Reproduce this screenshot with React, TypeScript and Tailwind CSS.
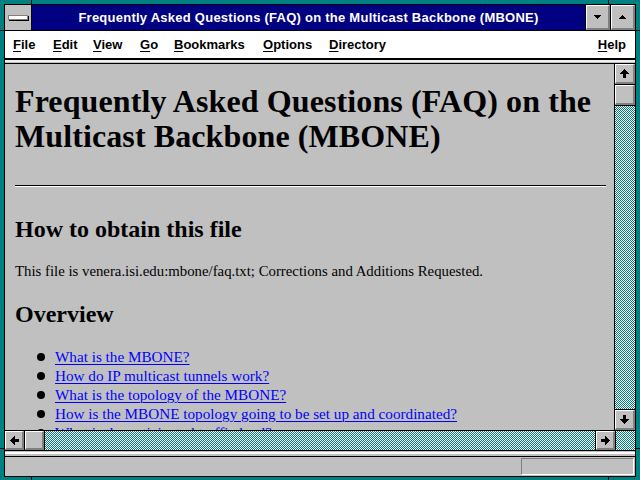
import React from 'react';

type Dir = 'up' | 'down' | 'left' | 'right';

const rotation: Record<Dir, string> = {
  up: '',
  down: 'rotate-180',
  left: '-rotate-90',
  right: 'rotate-90',
};

// Win 3.1 style fat arrow used on the scroll buttons
const Arrow: React.FC<{ dir: Dir }> = ({ dir }) => (
  <svg width="9" height="9" viewBox="0 0 9 9" shapeRendering="crispEdges" className={rotation[dir]}>
    <polygon points="4.5,0 9,5 6,5 6,9 3,9 3,5 0,5" fill="#000" />
  </svg>
);

const Bevel: React.FC<{ className?: string; children?: React.ReactNode }> = ({ className = '', children }) => (
  <div
    className={`bg-[#c0c0c0] border-t border-l border-t-white border-l-white border-b-2 border-r-2 border-b-[#808080] border-r-[#808080] flex items-center justify-center ${className}`}
  >
    {children}
  </div>
);

const checker =
  'bg-[image:repeating-conic-gradient(#008080_0_25%,#ffffff_0_50%)] bg-[length:2px_2px]';

const menu = [
  { key: 'F', rest: 'ile', w: 'w-[40px]' },
  { key: 'E', rest: 'dit', w: 'w-[40px]' },
  { key: 'V', rest: 'iew', w: 'w-[47px]' },
  { key: 'G', rest: 'o', w: 'w-[34px]' },
  { key: 'B', rest: 'ookmarks', w: 'w-[89px]' },
  { key: 'O', rest: 'ptions', w: 'w-[66px]' },
  { key: 'D', rest: 'irectory', w: 'w-[80px]' },
];

const links = [
  'What is the MBONE?',
  'How do IP multicast tunnels work?',
  'What is the topology of the MBONE?',
  'How is the MBONE topology going to be set up and coordinated?',
  'What is the anticipated traffic load?',
];

export default function App() {
  return (
    <div className="relative w-[640px] h-[480px] bg-[#008080] pt-[4px] pl-[4px] pr-[4px] pb-[3px] overflow-hidden font-['Liberation_Sans',sans-serif]">
      {/* resize corner notches in the frame */}
      <div className="absolute left-[31px] top-0 w-px h-[4px] bg-black" />
      <div className="absolute left-[608px] top-0 w-px h-[4px] bg-black" />
      <div className="absolute left-[31px] bottom-0 w-px h-[3px] bg-black" />
      <div className="absolute left-[608px] bottom-0 w-px h-[3px] bg-black" />
      <div className="absolute left-0 top-[30px] w-[4px] h-px bg-black" />
      <div className="absolute left-0 top-[448px] w-[4px] h-px bg-black" />
      <div className="absolute right-0 top-[30px] w-[4px] h-px bg-black" />
      <div className="absolute right-0 top-[448px] w-[4px] h-px bg-black" />

      <div className="w-[632px] h-[473px] border border-black flex flex-col bg-[#c0c0c0]">
        {/* title bar */}
        <div className="h-[25px] flex shrink-0">
          <div className="w-[26px] bg-[#c0c0c0] flex items-center justify-center">
            <div className="w-[20px] h-[5px] bg-white border border-[#808080] shadow-[1px_1px_0_#000]" />
          </div>
          <div className="w-px bg-black" />
          <div className="w-[553px] bg-[#000080] text-white font-bold text-[13px] tracking-[0.25px] flex items-center justify-center whitespace-nowrap">
            Frequently Asked Questions (FAQ) on the Multicast Backbone (MBONE)
          </div>
          <div className="w-px bg-black" />
          <Bevel className="w-[24px]">
            <svg width="7" height="4" viewBox="0 0 7 4" shapeRendering="crispEdges">
              <polygon points="0,0 7,0 3.5,4" fill="#000" />
            </svg>
          </Bevel>
          <div className="w-px bg-black" />
          <Bevel className="w-[24px]">
            <svg width="7" height="4" viewBox="0 0 7 4" shapeRendering="crispEdges">
              <polygon points="3.5,0 7,4 0,4" fill="#000" />
            </svg>
          </Bevel>
        </div>
        <div className="h-px bg-black shrink-0" />

        {/* menu bar */}
        <div className="h-[27px] bg-white flex items-center pl-[8px] text-[13px] font-bold text-black shrink-0">
          {menu.map((m) => (
            <div key={m.key} className={m.w}>
              <span className="underline underline-offset-2 decoration-1">{m.key}</span>
              {m.rest}
            </div>
          ))}
          <div className="ml-auto mr-[9px]">
            <span className="underline underline-offset-2 decoration-1">H</span>elp
          </div>
        </div>
        <div className="h-[2px] bg-black shrink-0" />
        <div className="h-[2px] bg-[#f0f0f0] shrink-0" />
        <div className="h-px bg-[#c0c0c0] shrink-0" />
        <div className="h-px bg-black shrink-0" />

        {/* document + vertical scrollbar */}
        <div className="h-[366px] flex shrink-0">
          <div className="w-[609px] overflow-hidden bg-[#c0c0c0] pl-[10px] pr-[8px] text-black font-['Liberation_Serif',serif]">
            <h1 className="mt-[20px] text-[32px] leading-[35px] font-bold tracking-[0.1px] whitespace-nowrap">
              Frequently Asked Questions (FAQ) on the
              <br />
              Multicast Backbone (MBONE)
            </h1>
            <div className="mt-[31px] border-t border-t-black border-b border-b-white" />
            <h2 className="mt-[28px] text-[24px] leading-[28px] font-bold">How to obtain this file</h2>
            <p className="mt-[19px] text-[14.8px] leading-[18px] whitespace-nowrap">
              This file is venera.isi.edu:mbone/faq.txt; Corrections and Additions Requested.
            </p>
            <h2 className="mt-[20px] text-[24px] leading-[28px] font-bold">Overview</h2>
            <ul className="mt-[19px]">
              {links.map((l) => (
                <li key={l} className="flex items-center h-[19px] text-[15.2px] leading-[19px] whitespace-nowrap">
                  <div className="w-[8px] h-[8px] rounded-full bg-black ml-[22px] mr-[10px] shrink-0" />
                  <a className="text-[#0000ff] underline underline-offset-2 decoration-1">{l}</a>
                </li>
              ))}
            </ul>
          </div>
          <div className="w-px bg-black" />
          <div className="w-[20px] flex flex-col">
            <Bevel className="h-[20px]">
              <Arrow dir="up" />
            </Bevel>
            <div className="h-px bg-black" />
            <Bevel className="h-[20px]" />
            <div className="h-px bg-black" />
            <div className={`flex-1 ${checker}`} />
            <div className="h-px bg-black" />
            <Bevel className="h-[20px]">
              <Arrow dir="down" />
            </Bevel>
          </div>
        </div>

        {/* horizontal scrollbar */}
        <div className="h-[21px] border-y border-black flex shrink-0">
          <Bevel className="w-[19px]">
            <Arrow dir="left" />
          </Bevel>
          <div className="w-px bg-black" />
          <Bevel className="w-[19px]" />
          <div className="w-px bg-black" />
          <div className={`flex-1 ${checker}`} />
          <div className="w-px bg-black" />
          <Bevel className="w-[19px]">
            <Arrow dir="right" />
          </Bevel>
          <div className="w-px bg-black" />
          <div className={`w-[19px] ${checker}`} />
        </div>

        <div className="h-[5px] bg-[#c0c0c0] pt-px shrink-0">
          <div className="h-[2px] bg-white" />
        </div>
        <div className="h-px bg-black shrink-0" />

        {/* status bar */}
        <div className="flex-1 flex items-center justify-end pr-px">
          <div className="w-[113px] h-[17px] border-t border-l border-[#808080] border-b border-r border-b-white border-r-white" />
        </div>
      </div>
    </div>
  );
}
